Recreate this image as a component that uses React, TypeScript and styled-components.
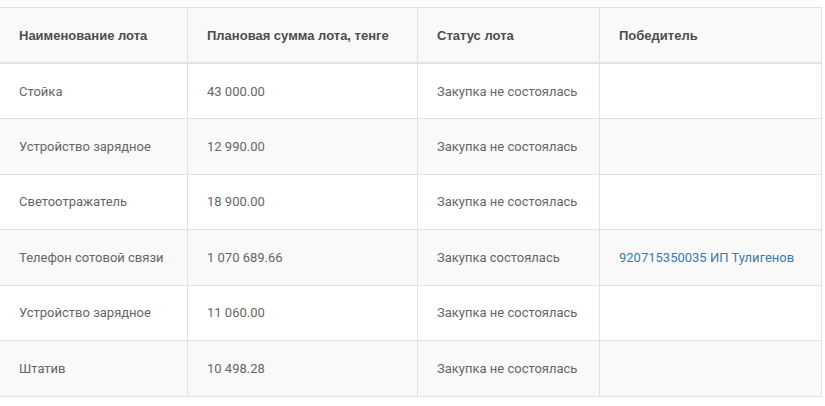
import React from 'react';
import styled, { createGlobalStyle } from 'styled-components';

const GlobalStyle = createGlobalStyle`
  body {
    margin: 0;
    background: #fff;
    font-family: Roboto, 'Liberation Sans', Arial, sans-serif;
  }
`;

const Wrapper = styled.div`
  padding-top: 7px;
  margin-left: -1px;
`;

const Table = styled.table`
  border-collapse: collapse;
  table-layout: fixed;
  width: 822px;
  font-size: 13px;
  color: #666;
`;

const HeadCell = styled.th`
  height: 54px;
  padding: 0 19px;
  text-align: left;
  font-family: 'Liberation Sans', Arial, sans-serif;
  font-weight: 700;
  color: #4d4d4d;
  background: #f9f9f9;
  border: 1px solid #e2e2e2;
  border-bottom: 2px solid #e2e2e2;
`;

const Row = styled.tr<{ $striped: boolean }>`
  height: 55.5px;
  background: ${(p) => (p.$striped ? '#f9f9f9' : '#fff')};
`;

const Cell = styled.td`
  padding: 0 19px;
  border: 1px solid #e2e2e2;
  vertical-align: middle;
`;

const WinnerLink = styled.a`
  color: #3a7ab0;
  text-decoration: none;
`;

const lots = [
  { name: 'Стойка', sum: '43 000.00', status: 'Закупка не состоялась', winner: '' },
  { name: 'Устройство зарядное', sum: '12 990.00', status: 'Закупка не состоялась', winner: '' },
  { name: 'Светоотражатель', sum: '18 900.00', status: 'Закупка не состоялась', winner: '' },
  { name: 'Телефон сотовой связи', sum: '1 070 689.66', status: 'Закупка состоялась', winner: '920715350035 ИП Тулигенов' },
  { name: 'Устройство зарядное', sum: '11 060.00', status: 'Закупка не состоялась', winner: '' },
  { name: 'Штатив', sum: '10 498.28', status: 'Закупка не состоялась', winner: '' },
];

const App = () => {
  return (
    <Wrapper>
      <GlobalStyle />
      <Table>
        <colgroup>
          <col style={{ width: 188 }} />
          <col style={{ width: 230 }} />
          <col style={{ width: 182 }} />
          <col style={{ width: 222 }} />
        </colgroup>
        <thead>
          <tr>
            <HeadCell>Наименование лота</HeadCell>
            <HeadCell>Плановая сумма лота, тенге</HeadCell>
            <HeadCell>Статус лота</HeadCell>
            <HeadCell>Победитель</HeadCell>
          </tr>
        </thead>
        <tbody>
          {lots.map((lot, i) => (
            <Row key={i} $striped={i % 2 === 1}>
              <Cell>{lot.name}</Cell>
              <Cell>{lot.sum}</Cell>
              <Cell>{lot.status}</Cell>
              <Cell>{lot.winner && <WinnerLink href="#">{lot.winner}</WinnerLink>}</Cell>
            </Row>
          ))}
        </tbody>
      </Table>
    </Wrapper>
  );
};

export default App;
